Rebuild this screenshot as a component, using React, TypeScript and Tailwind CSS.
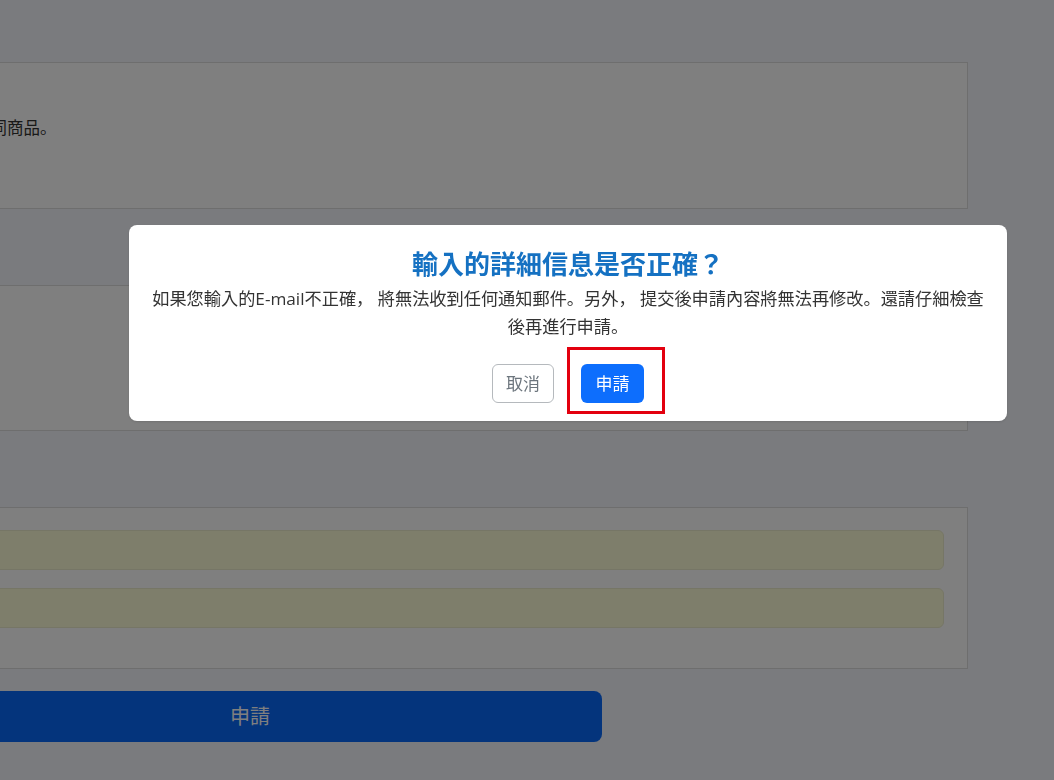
import React from "react";

const font = "font-['Open_Sans','Noto_Sans_CJK_JP',sans-serif]";

const ConfirmDialog = () => {
  return (
    <div className="fixed left-[129px] top-[225px] w-[878px] rounded-lg bg-white px-2 pt-[21px] pb-[18px] text-center shadow-sm">
      <h2 className="text-[26px] leading-[36px] font-bold text-[#1571c2]">
        輸入的詳細信息是否正確？
      </h2>
      <p className="mt-[3px] text-[17.2px] leading-[28px] text-[#333333]">
        <span className="whitespace-nowrap">
          如果您輸入的E-mail不正確， 將無法收到任何通知郵件。另外， 提交後申請內容將無法再修改。還請仔細檢查
        </span>
        <br />
        後再進行申請。
      </p>
      <div className="mt-[23px] flex justify-center gap-[27px]">
        <button className="h-[39px] w-[62px] rounded-md border border-[#b5b9bd] bg-white text-[17px] text-[#6c757d]">
          取消
        </button>
        <div className="relative">
          <button className="h-[39px] w-[63px] rounded-md bg-[#0d6efd] text-[17px] text-white">
            申請
          </button>
          {/* annotation box */}
          <span className="pointer-events-none absolute -left-[14px] -right-[21px] -top-[17px] -bottom-[11px] border-[3px] border-[#e3000f]" />
        </div>
      </div>
    </div>
  );
};

export default function App() {
  return (
    <div className={`relative h-[780px] w-[1054px] overflow-hidden bg-[#f4f6fc] ${font}`}>
      <div className="-ml-[138px] flex w-[1106px] flex-col pt-[62px]">
        {/* notice card */}
        <div className="h-[147px] border border-[#dcdcdc] bg-white pl-[12px] pt-[53px] text-[16.5px] leading-[24px] text-[#333333]">
          請勿重複申請相同商品。
        </div>

        {/* second card (behind dialog) */}
        <div className="mt-[76px] h-[146px] border border-[#dcdcdc] bg-white" />

        {/* input card */}
        <div className="mt-[76px] flex h-[162px] flex-col gap-[18px] border border-[#dcdcdc] bg-white pl-4 pr-[23px] pt-[22px]">
          <div className="h-[40px] rounded-md border border-[#ececcc] bg-[#fdfdd6]" />
          <div className="h-[40px] rounded-md border border-[#ececcc] bg-[#fdfdd6]" />
        </div>

        <button className="ml-[36px] mt-[22px] h-[51px] w-[704px] rounded-lg bg-[#0868f8] text-[20px] text-white">
          申請
        </button>
      </div>

      {/* backdrop */}
      <div className="fixed inset-0 bg-black/50" />

      <ConfirmDialog />
    </div>
  );
}
